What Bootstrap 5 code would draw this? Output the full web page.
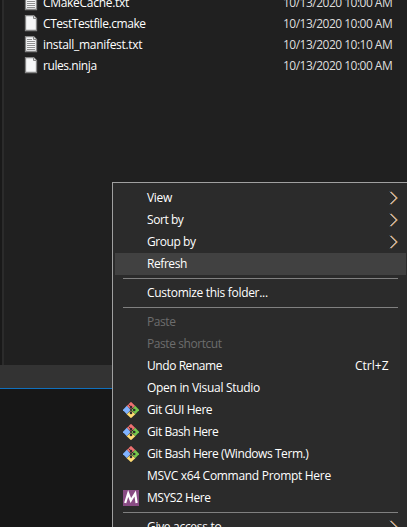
<!DOCTYPE html>
<html lang="en" data-bs-theme="dark">
<head>
<meta charset="utf-8">
<meta name="viewport" content="width=device-width, initial-scale=1">
<title>Explorer</title>
<link href="https://cdn.jsdelivr.net/npm/bootstrap@5.3.0/dist/css/bootstrap.min.css" rel="stylesheet">
<style>
body{width:407px;height:527px;background:#171717;font:12px/22px "Segoe UI","Open Sans","Noto Sans",sans-serif;letter-spacing:-.3px;color:#fff}
.explorer{height:389px;background:#333;border-bottom:1px solid #1070bd}
.pane{height:365px;background:#202020;border-left:2px solid #191919}
.pane-inner{display:flow-root;border-left:2px solid #2b2b2b;padding-left:20px}
.file-list{margin-top:-8px}
.file-row{height:21px;line-height:21px}
.file-row svg{width:14px;height:17px;margin-right:5px}
.file-date{margin-left:auto;width:124px;color:#dedede;letter-spacing:-.51px}
.ctx{left:112px;top:182px;width:296px;padding:4px 1px 4px 2px;background:#2b2b2b;border:1px solid #a0a0a0;border-radius:0}
.ctx .dropdown-item{height:22px;padding:0 8px;font-size:12px;line-height:22px;color:#fff}
.ctx .dropdown-item.hot{background:#414141}
.ctx .dropdown-item.disabled{color:#6d6d6d}
.tight{letter-spacing:-.43px}
.ico{width:16px;height:16px;margin-right:8px;flex:none}
.chev{width:9px;height:14px;flex:none}
.shortcut{width:43px;letter-spacing:0}
.sep{height:1px;margin:3px 8px;background:#808080}
</style>
</head>
<body class="overflow-hidden position-relative">
<svg class="d-none">
<defs>
<symbol id="page" viewBox="0 0 14 17"><path d="M1.5 .5h8l3 3v12h-11z" fill="#f5f6f7" stroke="#858585" stroke-width="1.3"/><path d="M9.5 .5v3h3" fill="#ddd" stroke="#858585"/></symbol>
<symbol id="text" viewBox="0 0 14 17"><use href="#page"/><path d="M3 3.5h5M3 5.5h8M3 7.5h8M3 9.5h8M3 11.5h8M3 13.5h8" stroke="#8f8f8f"/></symbol>
<symbol id="chevron" viewBox="0 0 9 14"><path d="M.9 .8l6.2 6.2L.9 13.2" fill="none" stroke="#3f97e0" stroke-width="1"/><path d="M2 .8l6.2 6.2L2 13.2" fill="none" stroke="#e58a30" stroke-width="1.1"/><path d="M1.5 .8l6.2 6.2L1.5 13.2" fill="none" stroke="#fff0d8" stroke-width=".6"/></symbol>
<symbol id="git" viewBox="0 0 16 16"><path d="M8 -.2l4.3 4.2-4.3 3.6-4.3-3.6z" fill="#ef7070"/><path d="M3.8 3.8l3.8 4.2-3.8 4.2L-.2 8z" fill="#80b3ff"/><path d="M12.2 3.8l4 4.2-4 4.2-3.8-4.2z" fill="#75c84c"/><path d="M8 8.6l4.3 3.6-4.3 4-4.3-4z" fill="#ffdc73"/><path d="M5.8 2.6L8 5v6M8.5 5.5l2.7 2.5" fill="none" stroke="#302c2c" stroke-width="1"/><circle cx="8" cy="5" r="1.3" fill="#302c2c"/><circle cx="8" cy="11" r="1.3" fill="#302c2c"/><circle cx="11.2" cy="8" r="1.3" fill="#302c2c"/></symbol>
<symbol id="msys" viewBox="0 0 16 16"><path d="M0 0h16v16H0z" fill="#894c84"/><path d="M2.2 13L5.2 3.5l2.6 7 4.4-7 1.4 9.5" fill="none" stroke="#fff" stroke-width="2.2"/></symbol>
</defs>
</svg>
<main class="explorer">
<div class="pane overflow-hidden"><div class="pane-inner h-100">
<div class="file-list">
<div class="file-row d-flex align-items-center"><svg><use href="#text"/></svg><span>CMakeCache.txt</span><span class="file-date">10/13/2020 10:00 AM</span></div>
<div class="file-row d-flex align-items-center"><svg><use href="#page"/></svg><span class="tight">CTestTestfile.cmake</span><span class="file-date">10/13/2020 10:00 AM</span></div>
<div class="file-row d-flex align-items-center"><svg><use href="#text"/></svg><span>install_manifest.txt</span><span class="file-date">10/13/2020 10:10 AM</span></div>
<div class="file-row d-flex align-items-center"><svg><use href="#page"/></svg><span class="tight">rules.ninja</span><span class="file-date">10/13/2020 10:00 AM</span></div>
</div></div></div>
</main>
<div class="ctx dropdown-menu d-block position-absolute">
<div class="dropdown-item d-flex align-items-center"><span class="ico"></span><span class="flex-grow-1">View</span><svg class="chev"><use href="#chevron"/></svg></div>
<div class="dropdown-item d-flex align-items-center"><span class="ico"></span><span class="flex-grow-1 tight">Sort by</span><svg class="chev"><use href="#chevron"/></svg></div>
<div class="dropdown-item d-flex align-items-center"><span class="ico"></span><span class="flex-grow-1 tight">Group by</span><svg class="chev"><use href="#chevron"/></svg></div>
<div class="dropdown-item d-flex align-items-center hot"><span class="ico"></span><span class="tight">Refresh</span></div>
<div class="sep"></div>
<div class="dropdown-item d-flex align-items-center"><span class="ico"></span><span>Customize this folder...</span></div>
<div class="sep"></div>
<div class="dropdown-item d-flex align-items-center disabled"><span class="ico"></span><span class="tight">Paste</span></div>
<div class="dropdown-item d-flex align-items-center disabled"><span class="ico"></span><span class="tight">Paste shortcut</span></div>
<div class="dropdown-item d-flex align-items-center"><span class="ico"></span><span class="flex-grow-1 tight">Undo Rename</span><span class="shortcut">Ctrl+Z</span></div>
<div class="dropdown-item d-flex align-items-center"><span class="ico"></span><span>Open in Visual Studio</span></div>
<div class="dropdown-item d-flex align-items-center"><svg class="ico"><use href="#git"/></svg><span class="tight">Git GUI Here</span></div>
<div class="dropdown-item d-flex align-items-center"><svg class="ico"><use href="#git"/></svg><span class="tight">Git Bash Here</span></div>
<div class="dropdown-item d-flex align-items-center"><svg class="ico"><use href="#git"/></svg><span class="tight">Git Bash Here (Windows Term.)</span></div>
<div class="dropdown-item d-flex align-items-center"><span class="ico"></span><span>MSVC x64 Command Prompt Here</span></div>
<div class="dropdown-item d-flex align-items-center"><svg class="ico"><use href="#msys"/></svg><span class="tight">MSYS2 Here</span></div>
<div class="sep"></div>
<div class="dropdown-item d-flex align-items-center"><span class="ico"></span><span class="flex-grow-1">Give access to</span><svg class="chev"><use href="#chevron"/></svg></div>
</div>
<script src="https://cdn.jsdelivr.net/npm/bootstrap@5.3.0/dist/js/bootstrap.bundle.min.js"></script>
</body>
</html>
